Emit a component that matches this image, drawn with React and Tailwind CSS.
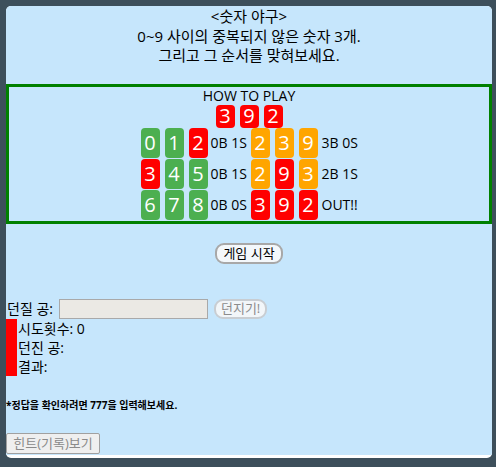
import React from "react";

const COLORS = {
  g: "bg-[#4caf50]",
  r: "bg-[#ff0000]",
  o: "bg-[#ffa500]",
};

function Box({ n, c, h = "h-[30px]" }) {
  return (
    <span
      className={`${COLORS[c]} ${h} w-[19px] rounded-[4px] flex items-center justify-center text-white text-[20px] leading-none`}
    >
      {n}
    </span>
  );
}

function Row({ left, leftRes, right, rightRes }) {
  return (
    <div className="flex items-center justify-center h-[31px]">
      <div className="flex gap-[5px]">
        {left.map(([n, c], i) => (
          <Box key={i} n={n} c={c} />
        ))}
      </div>
      <span className="ml-[3px] mr-[4px] text-[14px] leading-[18px] w-[36px] whitespace-nowrap">{leftRes}</span>
      <div className="flex gap-[5px]">
        {right.map(([n, c], i) => (
          <Box key={i} n={n} c={c} />
        ))}
      </div>
      <span className="ml-[4px] text-[14px] leading-[18px] w-[36px] whitespace-nowrap">{rightRes}</span>
    </div>
  );
}

export default function App() {
  return (
    <div
      className="min-h-[467px] bg-[#3d4f5b] pl-[6px] pr-[4px] pt-[6px] text-black"
      style={{ fontFamily: '"Open Sans", "Noto Sans CJK KR", sans-serif' }}
    >
      <div className="bg-white rounded-[5px] overflow-hidden pb-[3px]">
        <div className="bg-[#c6e6fc] pt-[1px] pb-[1px]">
          <div className="text-center text-[15px] leading-[19.5px]">
            <div>&lt;숫자 야구&gt;</div>
            <div>0~9 사이의 중복되지 않은 숫자 3개.</div>
            <div>그리고 그 순서를 맞혀보세요.</div>
          </div>

          <div className="mt-[18px] border-[3px] border-[#008000]">
            <div className="text-center text-[14px] leading-[18px]">HOW TO PLAY</div>
            <div className="flex justify-center gap-[5px]">
              <Box n="3" c="r" h="h-[23px]" />
              <Box n="9" c="r" h="h-[23px]" />
              <Box n="2" c="r" h="h-[23px]" />
            </div>
            <Row
              left={[["0", "g"], ["1", "g"], ["2", "r"]]}
              leftRes="0B 1S"
              right={[["2", "o"], ["3", "o"], ["9", "o"]]}
              rightRes="3B 0S"
            />
            <Row
              left={[["3", "r"], ["4", "g"], ["5", "g"]]}
              leftRes="0B 1S"
              right={[["2", "o"], ["9", "r"], ["3", "o"]]}
              rightRes="2B 1S"
            />
            <Row
              left={[["6", "g"], ["7", "g"], ["8", "g"]]}
              leftRes="0B 0S"
              right={[["3", "r"], ["9", "r"], ["2", "r"]]}
              rightRes="OUT!!"
            />
          </div>

          <div className="flex justify-center mt-[19px]">
            <button className="h-[21px] px-[6px] rounded-[9px] border-2 border-[#a8a8a8] bg-[#f4f8fb] text-[13px] leading-none text-black">
              게임 시작
            </button>
          </div>

          <div className="flex items-center mt-[35px] h-[20px] pl-[1px] text-[14px] leading-[20px]">
            <span>던질 공:</span>
            <input
              disabled
              className="ml-[6px] w-[149px] h-[20px] bg-[#ebe9e4] border border-[#a9a9a9]"
            />
            <button
              disabled
              className="ml-[6px] h-[20px] px-[5px] rounded-[9px] border-2 border-[#c8cdd2] bg-[#f2f6f9] text-[13px] leading-none text-[#8c8c8c]"
            >
              던지기!
            </button>
          </div>

          <div className="border-l-[11px] border-[#ff0000] pl-[1px] text-[14px] leading-[19px]">
            <div>시도횟수: 0</div>
            <div>던진 공:</div>
            <div>결과:</div>
          </div>

          <div className="mt-[22px] text-[10px] leading-[14px] font-bold">
            *정답을 확인하려면 777을 입력해보세요.
          </div>

          <div className="mt-[21px] flex">
            <button
              disabled
              className="h-[21px] w-[94px] border border-[#a0a0a0] bg-[#efefef] text-[13px] leading-none text-[#8a8a8a] rounded-[2px]"
            >
              힌트(기록)보기
            </button>
          </div>
        </div>
      </div>
    </div>
  );
}
